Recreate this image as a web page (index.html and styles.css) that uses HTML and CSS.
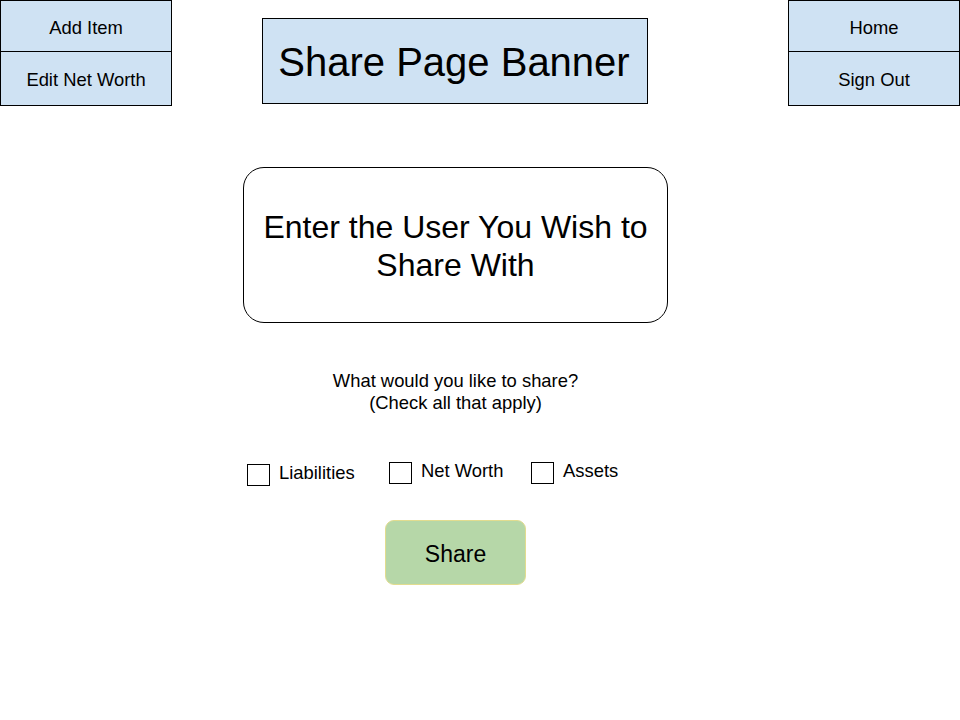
FILE: index.html
```html
<!DOCTYPE html>
<html lang="en">
<head>
<meta charset="utf-8">
<title>Share Page</title>
<link rel="stylesheet" href="styles.css">
</head>
<body>
  <header class="header">
    <nav class="nav">
      <div class="nav-btn nav-btn-first">Add Item</div>
      <div class="nav-btn">Edit Net Worth</div>
    </nav>
    <div class="banner">Share Page Banner</div>
    <nav class="nav nav-right">
      <div class="nav-btn nav-btn-first">Home</div>
      <div class="nav-btn">Sign Out</div>
    </nav>
  </header>
  <main class="main">
    <div class="user-box">Enter the User You Wish to Share With</div>
    <p class="question">What would you like to share?<br>(Check all that apply)</p>
    <div class="options">
      <label class="option option-low"><span class="box"></span><span class="label">Liabilities</span></label>
      <label class="option"><span class="box"></span><span class="label">Net Worth</span></label>
      <label class="option"><span class="box"></span><span class="label">Assets</span></label>
    </div>
    <div class="share-btn">Share</div>
  </main>
</body>
</html>
```
FILE: styles.css
```css
* { box-sizing: border-box; }
html, body {
  margin: 0;
  padding: 0;
  background: #ffffff;
  color: #000000;
  font-family: "Liberation Sans", Arial, sans-serif;
}
.header {
  display: flex;
  align-items: flex-start;
  height: 106px;
}
.nav {
  width: 172px;
  height: 106px;
  border: 1px solid #000;
  background: #cfe2f3;
  display: flex;
  flex-direction: column;
}
.nav-right {
  margin-left: auto;
}
.nav-btn {
  flex: 1;
  display: flex;
  align-items: center;
  justify-content: center;
  font-size: 18.4px;
  padding-top: 2px;
}
.nav-btn-first {
  flex: 0 0 51px;
  border-bottom: 1px solid #000;
  padding-top: 3px;
}
.banner {
  margin-left: 90px;
  margin-top: 18px;
  width: 386px;
  height: 86px;
  border: 1px solid #000;
  background: #cfe2f3;
  font-size: 40px;
  line-height: 46px;
  padding-top: 20px;
  padding-right: 2px;
  text-align: center;
}
.main {
  margin-left: 243px;
  width: 425px;
  padding-top: 61px;
  display: flex;
  flex-direction: column;
  align-items: center;
}
.user-box {
  width: 425px;
  height: 156px;
  border: 1px solid #000;
  border-radius: 21px;
  display: flex;
  align-items: center;
  justify-content: center;
  text-align: center;
  font-size: 32px;
  line-height: 38px;
  padding: 2px 16px 0;
}
.question {
  margin: 47px 0 0;
  font-size: 18.4px;
  line-height: 22px;
  text-align: center;
}
.options {
  align-self: stretch;
  margin-top: 48px;
  padding-left: 4px;
  display: grid;
  grid-template-columns: 142px 142px 142px;
  align-items: start;
}
.option {
  display: flex;
  align-items: flex-start;
  gap: 9px;
  font-size: 18.4px;
}
.option-low {
  margin-top: 2px;
}
.box {
  width: 23px;
  height: 22px;
  border: 1px solid #000;
  background: #fff;
  flex: none;
}
.label {
  line-height: 18px;
  white-space: nowrap;
}
.share-btn {
  margin-top: 34px;
  width: 141px;
  height: 65px;
  background: #b6d7a8;
  border: 1px solid #e2dc8f;
  border-radius: 9px;
  display: flex;
  align-items: center;
  justify-content: center;
  font-size: 23px;
  padding-top: 3px;
}
```
